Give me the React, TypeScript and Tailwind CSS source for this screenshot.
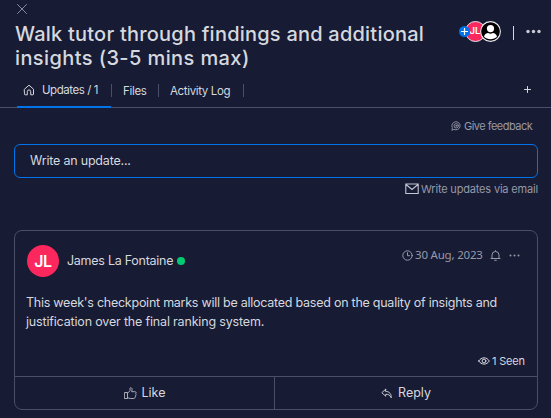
import type { ReactNode } from "react";

function Icon({ size, children, className = "", width = 1 }: { size: number; children: ReactNode; className?: string; width?: number }) {
  return (
    <svg width={size} height={size} viewBox={`0 0 ${size} ${size}`} fill="none" stroke="currentColor" strokeWidth={width} strokeLinecap="round" strokeLinejoin="round" className={`shrink-0 ${className}`}>
      {children}
    </svg>
  );
}

function Header() {
  return (
    <header className="flex h-[72px] flex-col pl-[15px]">
      <Icon size={12} className="mt-[3px] ml-px text-[#8b8c9b]">
        <path d="M1.5 1.5l9 9M10.5 1.5l-9 9" />
      </Icon>
      <div className="mt-[7px] flex">
        <h1 className="w-[420px] text-[20px] leading-6 font-medium text-[#d5d8df]">
          <span className="block whitespace-nowrap tracking-[0.22px]">Walk tutor through findings and additional</span>
          <span className="block whitespace-nowrap tracking-[0.4px]">insights (3-5 mins max)</span>
        </h1>
        <div className="ml-[24px] -mt-[2px] flex h-[22px] items-center">
          <div className="relative z-10 flex size-[11px] items-center justify-center rounded-full bg-[#0073ea] text-white">
            <Icon size={7} width={1.2}><path d="M3.5 0.5v6M0.5 3.5h6" /></Icon>
          </div>
          <div className="-ml-[5px] flex size-[21px] items-center justify-center rounded-full border border-[#e4e5ed] bg-[#fb275d] pr-px text-[9.5px] font-semibold text-white">JL</div>
          <svg width="21" height="21" viewBox="0 0 21 21" className="relative -ml-[6px]">
            <circle cx="10.5" cy="10.5" r="9.9" fill="#000" stroke="#e9e9ee" strokeWidth="1.1" />
            <circle cx="10.5" cy="7.6" r="3.6" fill="#fff" />
            <path d="M4 15.8c.5-2.6 2.2-3.8 4.2-3.8 1.4.9 3.2.9 4.6 0 2 0 3.7 1.2 4.2 3.8-3.3 3.3-9.7 3.3-13 0z" fill="#fff" />
          </svg>
          <div className="ml-[12px] mt-[3px] h-[14px] w-px bg-[#d5d8df]" />
          <svg width="15" height="5" viewBox="0 0 15 5" fill="#c9cbd6" className="ml-[12px]">
            <circle cx="2" cy="2.5" r="1.7" /><circle cx="7.5" cy="2.5" r="1.7" /><circle cx="13" cy="2.5" r="1.7" />
          </svg>
        </div>
      </div>
    </header>
  );
}

function Tabs() {
  return (
    <nav className="flex h-9 border-b border-[#4b4e69] text-[11.5px] leading-4 text-[#d5d8df]">
      <div className="ml-[17px] flex h-9 w-[94px] items-center border-b-2 border-[#0073ea] pt-[2px] pl-[6px]">
        <Icon size={12}>
          <path d="M1.500 5.200L6 1.200l4.500 4v5a.6.6 0 0 1-.6.600H7.700V7.600a1.700 1.700 0 0 0-3.400 0v3.200H2.100a.6.6 0 0 1-.6-.600z" />
        </Icon>
        <span className="ml-[7px] whitespace-nowrap tracking-[-0.45px]">Updates / 1</span>
      </div>
      <div className="mt-3 h-[13px] w-px bg-[#4b4e69]" />
      <div className="mt-[11px] w-[46px] pl-[11px] tracking-[-0.3px]">Files</div>
      <div className="mt-3 h-[13px] w-px bg-[#4b4e69]" />
      <div className="mt-[11px] w-[84px] pl-[11px] whitespace-nowrap tracking-[-0.35px]">Activity Log</div>
      <div className="mt-3 h-[13px] w-px bg-[#4b4e69]" />
      <Icon size={7} className="mt-[14px] mr-[20px] ml-auto"><path d="M3.5 .5v6M.5 3.5h6" /></Icon>
    </nav>
  );
}

function Post() {
  return (
    <article className="mt-[33px] flex h-[180px] flex-col rounded-lg border border-[#4b4e69]">
      <div className="flex h-[145px] flex-col px-3 pt-[14px]">
        <div className="flex h-8 items-center">
          <div className="flex size-8 items-center justify-center rounded-full bg-[#fb275d] text-[16px] font-semibold tracking-[-0.3px] text-white">JL</div>
          <span className="ml-[8px] w-[107px] whitespace-nowrap text-[12.5px] tracking-[-0.27px]">James La Fontaine</span>
          <span className="ml-[3px] size-2 rounded-full bg-[#00ca72]" />
          <div className="mr-[5px] ml-auto flex h-4 -translate-y-[6px] items-center text-[#9699a6]">
            <Icon size={11}><circle cx="5.5" cy="5.5" r="4.7" /><path d="M5.5 2.7v3h2" /></Icon>
            <span className="ml-[2px] w-[69px] whitespace-nowrap font-['Noto_Sans',sans-serif] text-[11.5px] tracking-[-0.2px]">30 Aug, 2023</span>
            <Icon size={11} className="ml-[6px]"><path d="M1 8.5h9M2 8.5V5a3.5 3.5 0 0 1 7 0v3.5M4.7 10.3h1.6M5.5 .7v.7" /></Icon>
            <svg width="11" height="3" viewBox="0 0 11 3" fill="currentColor" className="ml-[8px]"><circle cx="1.5" cy="1.5" r="1" /><circle cx="5.5" cy="1.5" r="1" /><circle cx="9.5" cy="1.5" r="1" /></svg>
          </div>
        </div>
        <p className="mt-4 -ml-px text-[12.5px] leading-[19px] whitespace-nowrap">
          <span className="block tracking-[-0.25px]">This week's checkpoint marks will be allocated based on the quality of insights and</span>
          <span className="block tracking-[-0.17px]">justification over the final ranking system.</span>
        </p>
        <div className="mt-[22px] flex h-4 items-center justify-end text-[11px]">
          <Icon size={12}><path d="M.7 6C3.3 1.7 8.7 1.7 11.3 6 8.7 10.2 3.3 10.2 .7 6z" /><circle cx="6" cy="6" r="1.9" /></Icon>
          <span className="ml-[2px] w-[33px] whitespace-nowrap tracking-[-0.2px]">1 Seen</span>
        </div>
      </div>
      <div className="flex flex-1 border-t border-[#4b4e69] text-[12.5px]">
        <button className="flex w-[260px] items-center justify-center border-r border-[#4b4e69]">
          <Icon size={13} width={0.9} className="text-[#b9bbc6]"><path d="M.8 5.500h2.700v6H.8zM3.500 6.200L6 3.700V1.300c0-1.100 2.300-.7 2.100 1.200L7.700 4.700h3.200c1.400 0 1.500 1.300.8 1.700.7.500.6 1.500-.2 1.800.5.600.2 1.500-.5 1.600.3.900-.2 1.700-1.200 1.700H6.500c-1.300 0-1.800-.7-3-.8" /></Icon>
          <span className="ml-[5px]">Like</span>
        </button>
        <button className="flex flex-1 items-center justify-center">
          <Icon size={11} width={0.9}><path d="M4.700 1.200L.8 4.700l3.900 3.500V6.300c2.800-.1 4.300.7 5.500 3.500.3-3.500-1.400-6.300-5.500-6.500z" /></Icon>
          <span className="ml-[6px]">Reply</span>
        </button>
      </div>
    </article>
  );
}

export default function App() {
  return (
    <div className="h-[418px] w-[551px] overflow-hidden bg-[#181b34] font-['Inter',sans-serif] text-[#d5d8df]">
      <Header />
      <Tabs />
      <main className="mr-[13px] ml-[14px]">
        <div className="mt-[10px] flex h-4 items-center justify-end pr-[6px] text-[11px] text-[#9699a6]">
          <Icon size={10} width={0.9}><path d="M1 9l.4-2.200a4.100 4.100 0 1 1 1.800 1.700z" /><circle cx="5.200" cy="4.800" r="2.200" /><circle cx="5.200" cy="4.800" r=".5" /></Icon>
          <span className="ml-[3px] w-[68px] whitespace-nowrap tracking-[-0.52px]">Give feedback</span>
        </div>
        <div className="mt-[10px] flex h-[34px] items-center rounded-md border border-[#0073ea] pl-[15px] text-[12.5px] tracking-[-0.2px]">Write an update...</div>
        <div className="mt-[3px] flex h-4 items-center justify-end text-[11px] text-[#9699a6]">
          <svg width="14" height="12" viewBox="0 0 14 12" fill="none" stroke="#c3c6d4" strokeWidth="1.1"><path d="M.8 1h12.4v9.500H.8zM1 1.500l6 5 6-5" /></svg>
          <span className="ml-[2px] w-[117px] whitespace-nowrap tracking-[-0.18px]">Write updates via email</span>
        </div>
        <Post />
      </main>
    </div>
  );
}
